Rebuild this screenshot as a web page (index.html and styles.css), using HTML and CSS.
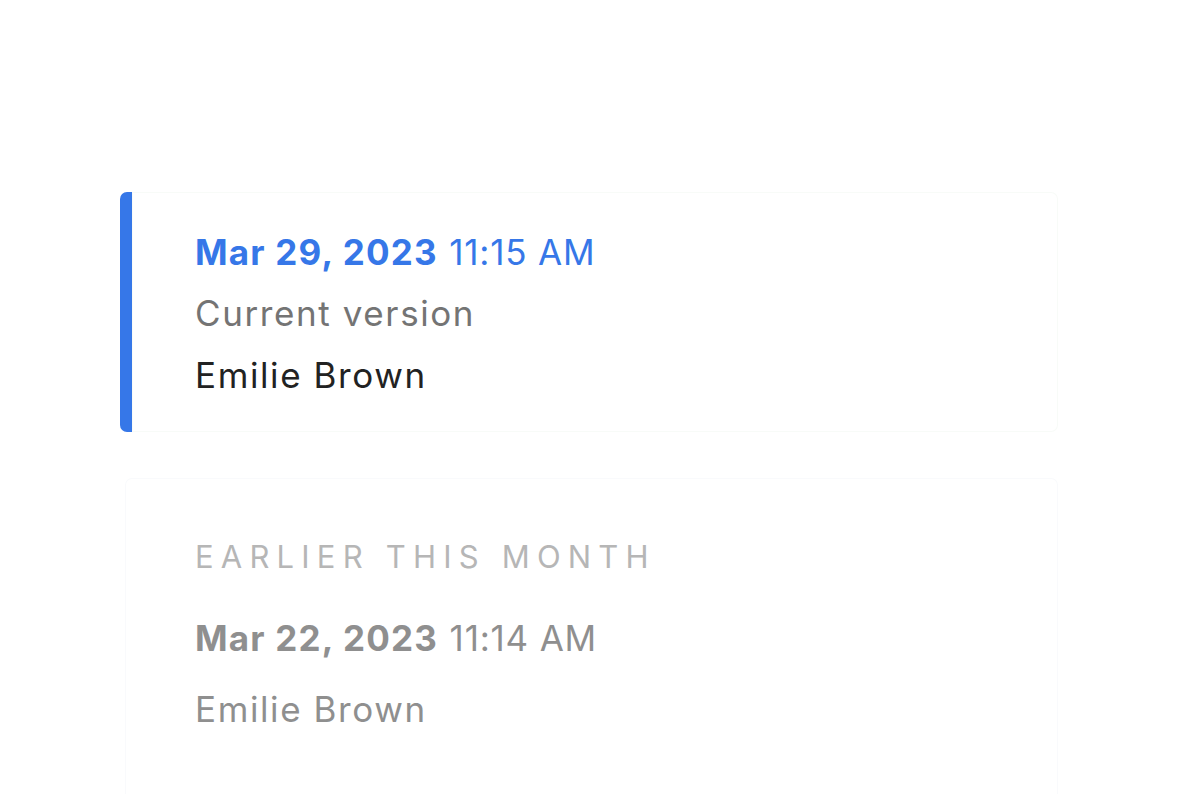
FILE: index.html
```html
<!DOCTYPE html>
<html lang="en">
<head>
    <meta charset="UTF-8">
    <meta name="viewport" content="width=device-width, initial-scale=1.0">
    <title>Version history</title>
    <link rel="stylesheet" href="styles.css">
</head>
<body>
    <div class="history">
        <!-- Current version -->
        <div class="version current">
            <div class="stamp"><b>Mar 29, 2023</b> <span class="time">11:15 AM</span></div>
            <div class="label">Current version</div>
            <div class="author">Emilie Brown</div>
        </div>

        <!-- Older versions -->
        <div class="group">
            <div class="group-title">Earlier this month</div>
            <div class="version">
                <div class="stamp"><b>Mar 22, 2023</b> <span class="time">11:14 AM</span></div>
                <div class="author">Emilie Brown</div>
            </div>
        </div>
    </div>
</body>
</html>
```

FILE: styles.css
```css
body {
    margin: 0;
    background: #fff;
    font-family: Inter, "Noto Sans", sans-serif;
    color: #222;
    height: 794px;
    overflow: hidden;
}
.history {
    width: 938px;
    padding: 192px 0 0 120px;
    display: flex;
    flex-direction: column;
    gap: 46px;
}
.version {
    font-size: 35px;
    letter-spacing: 1.6px;
}
.version.current {
    height: 240px;
    box-sizing: border-box;
    padding: 40px 0 0 63px;
    border-left: 12px solid #3677e8;
    border-radius: 7px;
    background: #fff;
    box-shadow: inset 0 0 0 1px #f8fbf8;
}
.stamp {
    color: #3677e8;
    line-height: 40px;
}
.stamp b {
    font-weight: 700;
    letter-spacing: 1.2px;
}
.stamp .time {
    letter-spacing: 0.8px;
}
.label {
    color: #747474;
    margin-top: 21px;
    line-height: 40px;
}
.author {
    color: #222;
    margin-top: 22px;
    line-height: 40px;
}
.group {
    margin-left: 5px;
    padding: 61px 0 0 70px;
    height: 330px;
    border-radius: 7px;
    background: #fff;
    box-shadow: inset 0 0 0 1px #f9fafc;
}
.group-title {
    font-size: 31px;
    letter-spacing: 7.2px;
    text-transform: uppercase;
    color: #b6b6b6;
    line-height: 36px;
}
.group .version {
    margin-top: 43px;
}
.group .stamp {
    color: #8f8f8f;
}
.group .author {
    color: #8f8f8f;
    margin-top: 31px;
}
```
